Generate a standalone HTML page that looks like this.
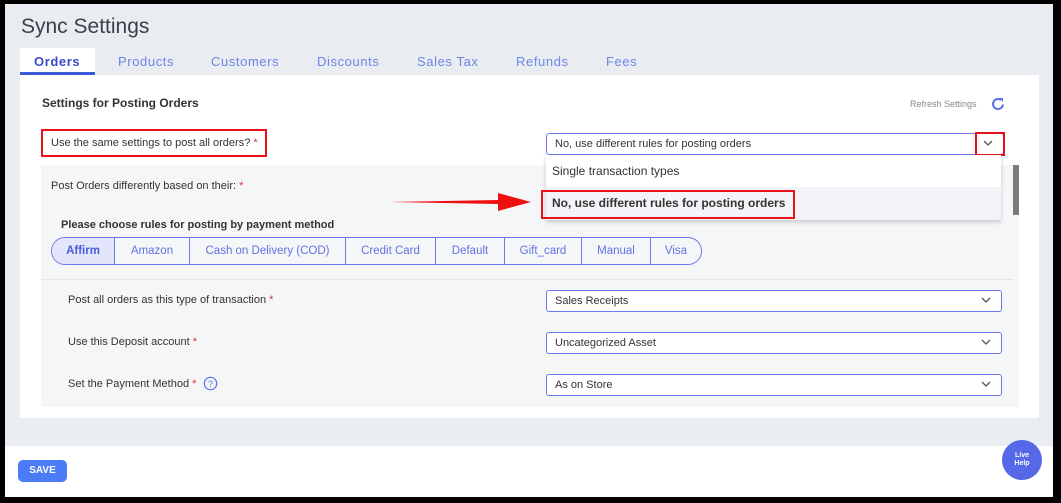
<!DOCTYPE html>
<html><head><meta charset="utf-8"><style>
*{box-sizing:border-box;margin:0;padding:0}
body{width:1061px;height:503px;overflow:hidden;background:#000;font-family:"Liberation Sans",sans-serif;position:relative}
.a{position:absolute}
.frame{left:5px;top:4px;width:1048px;height:493px;background:#e9ecf1}
.title{left:21px;top:15px;font-size:21px;color:#3a3f48}
.tab{top:54px;font-size:13px;color:#6d86e6;letter-spacing:.6px}
.card{left:20px;top:75px;width:1019px;height:343px;background:#fff}
.sel{background:#fff;border:1px solid #6b78ee;border-radius:3px;font-size:11px;color:#333;padding-left:8px;line-height:20px}
.chev{position:absolute;right:10px;top:5px}
.lbl{font-size:11px;color:#333}
.star{color:#d33}
.pills{left:51px;top:237px;height:28px;display:flex;border:1px solid #6b78ee;border-radius:14px;overflow:hidden}
.pills div{font-size:11.5px;color:#6272e0;line-height:26px;border-right:1px solid #6b78ee;text-align:center}
.pills div:last-child{border-right:none}
.red{border:2px solid #e8101a}
</style></head><body>
<div class="a frame"></div>
<div class="a title">Sync Settings</div>
<div class="a" style="left:20px;top:48px;width:75px;height:27px;background:#fff"></div>
<div class="a" style="left:20px;top:72px;width:75px;height:3px;background:#3b5bdb"></div>
<div class="a tab" style="left:34px;color:#3b4bc8;font-weight:bold">Orders</div>
<div class="a tab" style="left:118px">Products</div>
<div class="a tab" style="left:211px">Customers</div>
<div class="a tab" style="left:317px">Discounts</div>
<div class="a tab" style="left:417px">Sales Tax</div>
<div class="a tab" style="left:516px">Refunds</div>
<div class="a tab" style="left:606px">Fees</div>
<div class="a card"></div>
<div class="a" style="left:42px;top:96px;font-size:12px;font-weight:bold;color:#333">Settings for Posting Orders</div>
<div class="a" style="left:910px;top:99px;font-size:9px;color:#888">Refresh Settings</div>
<svg class="a" style="left:990px;top:96px" width="16" height="16" viewBox="0 0 16 16"><path d="M13 8.5A5 5 0 1 1 11 4" fill="none" stroke="#5a70e8" stroke-width="2"/><path d="M9 2h4v4z" fill="#5a70e8"/></svg>
<div class="a red" style="left:41px;top:129px;width:226px;height:28px"></div>
<div class="a lbl" style="left:51px;top:137px">Use the same settings to post all orders? <span class="star">*</span></div>
<div class="a" style="left:41px;top:165px;width:978px;height:242px;background:#f5f6f8"></div>
<div class="a" style="left:1013px;top:165px;width:6px;height:50px;background:#7a7a7a"></div>
<div class="a lbl" style="left:51px;top:180px">Post Orders differently based on their: <span class="star">*</span></div>
<div class="a" style="left:61px;top:219px;font-size:11px;font-weight:bold;color:#333">Please choose rules for posting by payment method</div>
<div class="a pills">
<div style="width:63px;background:#e3e6fb;font-weight:bold;color:#4a5ae0">Affirm</div><div style="width:75px">Amazon</div><div style="width:156px">Cash on Delivery (COD)</div><div style="width:90px">Credit Card</div><div style="width:69px">Default</div><div style="width:77px">Gift_card</div><div style="width:69px">Manual</div><div style="width:50px">Visa</div>
</div>
<div class="a" style="left:41px;top:279px;width:972px;height:1px;background:#e3e5e9"></div>
<div class="a lbl" style="left:68px;top:294px">Post all orders as this type of transaction <span class="star">*</span></div>
<div class="a lbl" style="left:68px;top:336px">Use this Deposit account <span class="star">*</span></div>
<div class="a lbl" style="left:68px;top:378px">Set the Payment Method <span class="star">*</span></div>
<svg class="a" style="left:203px;top:376px" width="15" height="15" viewBox="0 0 15 15"><circle cx="7.5" cy="7.5" r="6.2" fill="none" stroke="#5a70e8" stroke-width="1.2"/><text x="7.5" y="11" font-size="9" text-anchor="middle" fill="#5a70e8" font-family="Liberation Sans">?</text></svg>
<div class="a sel" style="left:546px;top:290px;width:456px;height:22px">Sales Receipts<svg class="chev" width="10" height="8"><path d="M1 2l4 4 4-4" fill="none" stroke="#555" stroke-width="1.3"/></svg></div>
<div class="a sel" style="left:546px;top:332px;width:456px;height:22px">Uncategorized Asset<svg class="chev" width="10" height="8"><path d="M1 2l4 4 4-4" fill="none" stroke="#555" stroke-width="1.3"/></svg></div>
<div class="a sel" style="left:546px;top:374px;width:456px;height:22px">As on Store<svg class="chev" width="10" height="8"><path d="M1 2l4 4 4-4" fill="none" stroke="#555" stroke-width="1.3"/></svg></div>
<div class="a sel" style="left:546px;top:133px;width:458px;height:22px;line-height:20px">No, use different rules for posting orders<svg class="chev" width="10" height="8"><path d="M1 2l4 4 4-4" fill="none" stroke="#555" stroke-width="1.3"/></svg></div>
<div class="a red" style="left:975px;top:132px;width:30px;height:24px"></div>
<div class="a" style="left:546px;top:155px;width:455px;height:65px;background:#fff;box-shadow:0 2px 4px rgba(0,0,0,.2)"></div>
<div class="a" style="left:546px;top:187px;width:455px;height:33px;background:#f2f4f7"></div>
<div class="a" style="left:552px;top:164px;font-size:12px;color:#333">Single transaction types</div>
<div class="a" style="left:552px;top:196px;font-size:12px;font-weight:bold;color:#333">No, use different rules for posting orders</div>
<div class="a red" style="left:541px;top:190px;width:254px;height:29px"></div>
<svg class="a" style="left:388px;top:190px" width="145" height="24"><path d="M2 12L110 10L110 3L143 12L110 21L110 14Z" fill="#ee1010"/></svg>
<div class="a" style="left:5px;top:446px;width:1048px;height:51px;background:#fff"></div>
<div class="a" style="left:18px;top:460px;width:49px;height:22px;background:#4a7cf7;border-radius:5px;color:#fff;font-size:10px;font-weight:bold;text-align:center;line-height:22px">SAVE</div>
<div class="a" style="left:1002px;top:440px;width:40px;height:40px;border-radius:50%;background:#5468e8;color:#fff;font-size:7px;font-weight:bold;text-align:center;padding-top:12px;line-height:8px">Live<br>Help</div>
</body></html>
